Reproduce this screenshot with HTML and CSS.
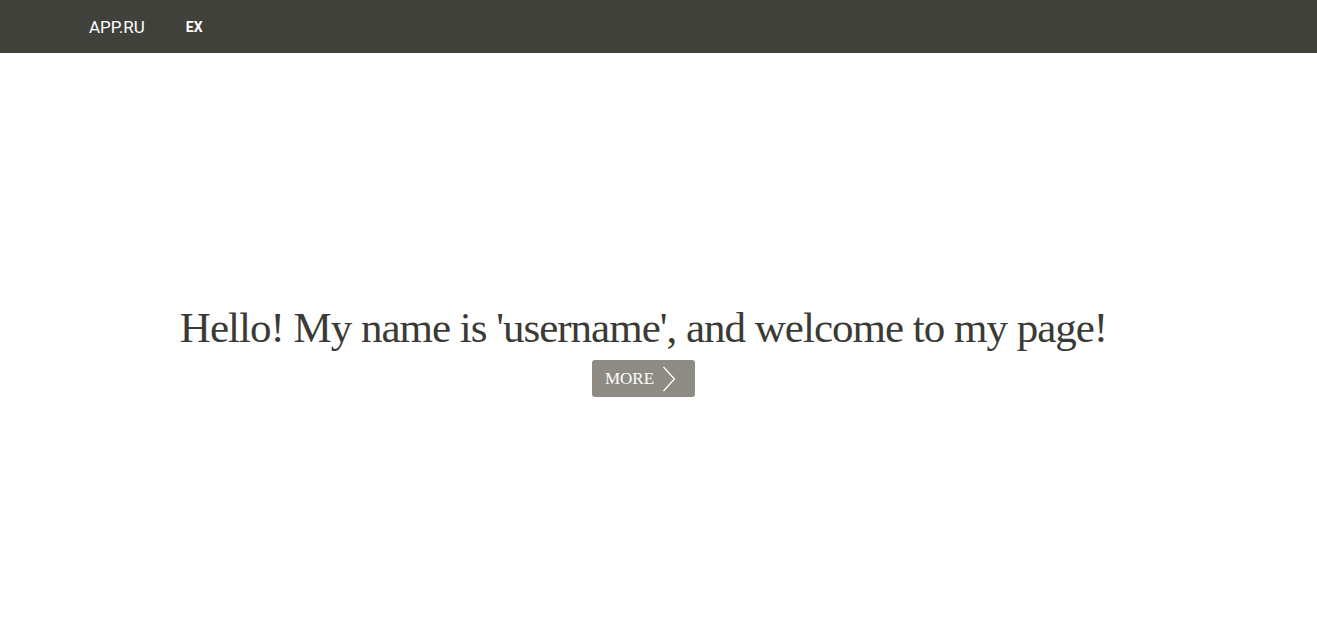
FILE: index.html
```html
<!DOCTYPE html>
<html lang="en">
<head>
<meta charset="utf-8">
<title>APP.RU</title>
<link rel="stylesheet" href="styles.css">
</head>
<body>
<header class="navbar">
  <a class="brand" href="#">APP.RU</a>
  <a class="nav-link" href="#">EX</a>
</header>
<main class="hero">
  <h1 class="hero-title">Hello! My name is 'username', and welcome to my page!</h1>
  <a class="more-btn" href="#">MORE
    <svg class="chev" width="14" height="26" viewBox="0 0 14 26" aria-hidden="true"><path d="M1.5 1 L12.5 13 L1.5 25" fill="none" stroke="#fff" stroke-width="1.3"/></svg>
  </a>
</main>
</body>
</html>
```
FILE: styles.css
```css
html, body {
  margin: 0;
  padding: 0;
  background: #ffffff;
}
.navbar {
  height: 53px;
  background: #41413b;
  display: flex;
  align-items: center;
  padding-left: 89px;
  box-sizing: border-box;
}
.brand {
  font-family: Roboto, "Liberation Sans", sans-serif;
  font-size: 17px;
  color: #ffffff;
  text-decoration: none;
  margin-right: 41px;
}
.nav-link {
  font-family: Roboto, "Liberation Sans", sans-serif;
  font-size: 14px;
  font-weight: 700;
  color: #ffffff;
  text-decoration: none;
}
.hero {
  display: flex;
  flex-direction: column;
  align-items: center;
  padding: 250px 30px 0 0;
}
.hero-title {
  margin: 0;
  font-family: "Liberation Serif", "DejaVu Serif", serif;
  font-weight: 400;
  font-size: 43px;
  line-height: 50px;
  letter-spacing: -1px;
  color: #3a3a36;
}
.more-btn {
  margin-top: 7px;
  display: flex;
  align-items: center;
  gap: 8px;
  height: 37px;
  padding: 0 19px 0 13px;
  box-sizing: border-box;
  background: #8e8b85;
  border-radius: 3px;
  font-family: "Liberation Serif", serif;
  font-size: 17px;
  color: #ffffff;
  text-decoration: none;
}
.chev {
  display: block;
}
```
